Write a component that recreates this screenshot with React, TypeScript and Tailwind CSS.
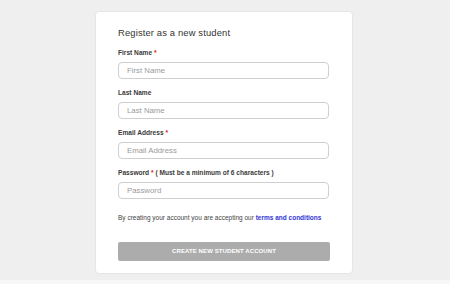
import React from "react";

const fields = [
  { label: "First Name", required: true, placeholder: "First Name", type: "text" },
  { label: "Last Name", required: false, placeholder: "Last Name", type: "text" },
  { label: "Email Address", required: true, placeholder: "Email Address", type: "email" },
  {
    label: "Password",
    required: true,
    hint: "( Must be a minimum of 6 characters )",
    placeholder: "Password",
    type: "password",
  },
];

export default function App() {
  return (
    <div className="h-[284px] w-[450px] bg-[#efefef] pt-[11px] font-['Liberation_Sans',Arial,sans-serif]">
      <div className="ml-[95px] h-[263px] w-[258px] rounded-[4px] border border-[#e6e6e6] bg-white px-[22px] pt-[14px]">
        <h1 className="text-[9.4px] leading-[14px] text-[#333] tracking-[0.15px]">
          Register as a new student
        </h1>
        <form className="mt-[8px] flex flex-col gap-[9px]" onSubmit={(e) => e.preventDefault()}>
          {fields.map((f) => (
            <div key={f.label} className="flex flex-col gap-[4px]">
              <label className="whitespace-nowrap text-[6.6px] leading-[10px] font-bold text-[#3a3a3a]">
                {f.label}
                {f.required && <span className="text-[#e02020]"> *</span>}
                {f.hint && <span> {f.hint}</span>}
              </label>
              <input
                type={f.type}
                placeholder={f.placeholder}
                className="h-[17px] w-[211px] rounded-[4px] border border-[#cfcfcf] px-[8px] text-[7.8px] text-[#333] outline-none placeholder:text-[#9a9a9a]"
              />
            </div>
          ))}
        </form>
        <p className="mt-[14px] whitespace-nowrap text-[6.5px] leading-[10px] text-[#444]">
          By creating your account you are accepting our{" "}
          <a href="#" className="font-bold text-[#2f35d4]">
            terms and conditions
          </a>
        </p>
        <button className="mt-[19px] h-[19px] w-[212px] rounded-[2px] bg-[#acacac] text-[6px] font-bold uppercase tracking-[0.1px] text-white">
          Create new student account
        </button>
      </div>
      <div className="mt-[6px] h-[4px] bg-[#f7f7f7]" />
    </div>
  );
}
